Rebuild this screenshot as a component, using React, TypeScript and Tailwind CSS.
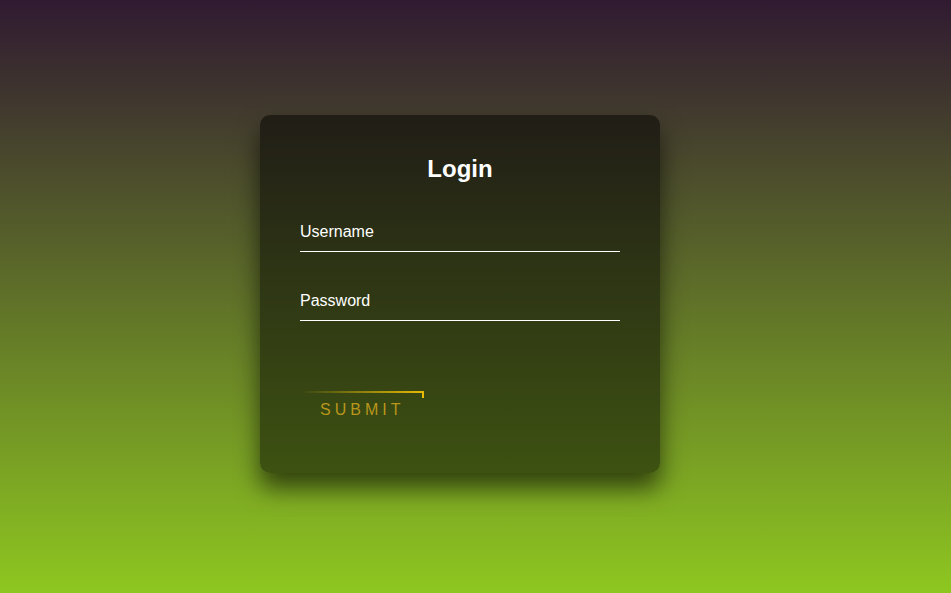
const App = () => {
  return (
    <div
      className="min-h-[593px] w-full bg-[linear-gradient(to_bottom,#301a31,#8ec720)] pt-[115px] pl-[260px]"
      style={{ fontFamily: '"Liberation Sans", Arial, sans-serif' }}
    >
      <div className="w-[400px] h-[358px] rounded-[10px] bg-black/50 p-10 shadow-[0_15px_25px_rgba(0,0,0,0.6)]">
        <h2 className="mb-[30px] text-center text-2xl leading-7 font-bold text-white">Login</h2>
        <form>
          <div className="relative">
            <input
              type="text"
              className="mb-[30px] block w-full border-b border-white bg-transparent py-2.5 text-base leading-[18px] text-white outline-none"
            />
            <label className="absolute top-0 left-0 py-2.5 text-base leading-[18px] text-white">Username</label>
          </div>
          <div className="relative">
            <input
              type="password"
              className="mb-[30px] block w-full border-b border-white bg-transparent py-2.5 text-base leading-[18px] text-white outline-none"
            />
            <label className="absolute top-0 left-0 py-2.5 text-base leading-[18px] text-white">Password</label>
          </div>
          <a className="relative mt-10 inline-block overflow-hidden px-5 py-2.5 text-base leading-[18px] tracking-[4px] text-[#b8961c] uppercase">
            <span className="absolute top-0 left-0 h-[2px] w-full bg-[linear-gradient(90deg,transparent,#e8bb05)]" />
            <span className="absolute top-0 right-0 h-[7px] w-[2px] bg-[#e8bb05]" />
            Submit
          </a>
        </form>
      </div>
    </div>
  );
};

export default App;
